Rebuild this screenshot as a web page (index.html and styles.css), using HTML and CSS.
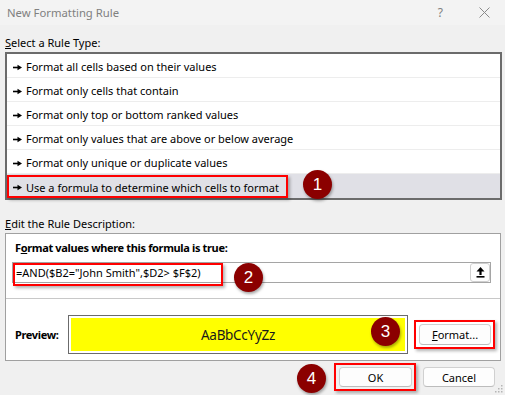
FILE: index.html
```html
<!DOCTYPE html>
<html lang="en">
<head>
  <meta charset="UTF-8"/>
  <title>New Formatting Rule</title>
  <link rel="stylesheet" href="styles.css">
</head>
<body>

  <svg width="0" height="0" class="defs">
    <symbol id="arrow" viewBox="0 0 9 7">
      <rect x="0" y="2.7" width="5" height="1.6" fill="#000"/>
      <polygon points="4.5,0.8 9,3.5 4.5,6.2" fill="#000"/>
    </symbol>
  </svg>

  <div class="dialog">
    <header class="titlebar">
      <span class="title">New Formatting Rule</span>
      <span class="help">?</span>
      <svg class="close" width="11" height="11" viewBox="0 0 11 11">
        <path d="M0.5 0.5 L10.5 10.5 M10.5 0.5 L0.5 10.5" stroke="#8a8a8a" stroke-width="1"/>
      </svg>
    </header>

    <div class="section-label"><u>S</u>elect a Rule Type:</div>
    <ul class="rule-list">
      <li><svg class="bullet"><use href="#arrow"/></svg>Format all cells based on their values</li>
      <li><svg class="bullet"><use href="#arrow"/></svg>Format only cells that contain</li>
      <li><svg class="bullet"><use href="#arrow"/></svg>Format only top or bottom ranked values</li>
      <li><svg class="bullet"><use href="#arrow"/></svg>Format only values that are above or below average</li>
      <li><svg class="bullet"><use href="#arrow"/></svg>Format only unique or duplicate values</li>
      <li class="selected">
        <svg class="bullet"><use href="#arrow"/></svg>Use a formula to determine which cells to format
        <span class="mark mark-rule"></span>
        <span class="badge badge-1">1</span>
      </li>
    </ul>

    <div class="section-label edit-label"><u>E</u>dit the Rule Description:</div>
    <div class="group">
      <div class="group-title">F<u>o</u>rmat values where this formula is true:</div>
      <div class="formula">
        <span class="formula-text">=AND($B2="John Smith",$D2&gt; $F$2)</span>
        <button class="pick-btn">
          <svg width="9" height="11" viewBox="0 0 9 11">
            <polygon points="4.5,0 0.5,4.5 8.5,4.5" fill="#000"/>
            <rect x="3.4" y="4" width="2.2" height="4" fill="#000"/>
            <rect x="0.5" y="9" width="8" height="1.6" fill="#000"/>
          </svg>
        </button>
        <span class="mark mark-formula"></span>
        <span class="badge badge-2">2</span>
      </div>

      <div class="rule-sep"></div>

      <div class="preview-row">
        <span class="preview-label">Preview:</span>
        <div class="preview">
          <div class="preview-fill">AaBbCcYyZz</div>
          <span class="badge badge-3">3</span>
        </div>
        <button class="btn format-btn boxed"><u>F</u>ormat...</button>
      </div>
    </div>

    <div class="actions">
      <button class="btn ok-btn boxed">OK<span class="badge badge-4">4</span></button>
      <button class="btn cancel-btn">Cancel</button>
    </div>

    <svg class="grip" width="8" height="8" viewBox="0 0 8 8">
      <rect x="6" y="0" width="1.5" height="1.5" fill="#b5b5b5"/>
      <rect x="3" y="3" width="1.5" height="1.5" fill="#b5b5b5"/>
      <rect x="6" y="3" width="1.5" height="1.5" fill="#b5b5b5"/>
      <rect x="0" y="6" width="1.5" height="1.5" fill="#b5b5b5"/>
      <rect x="3" y="6" width="1.5" height="1.5" fill="#b5b5b5"/>
      <rect x="6" y="6" width="1.5" height="1.5" fill="#b5b5b5"/>
    </svg>
  </div>

</body>
</html>
```

FILE: styles.css
```css
* {
  box-sizing: border-box;
}
body {
  margin: 0;
  background: #f0f0f0;
  font-family: 'Noto Sans', 'Liberation Sans', sans-serif;
  font-size: 11px;
  color: #000;
}

.defs {
  position: absolute;
}

.dialog {
  position: relative;
  width: 505px;
  height: 395px;
  overflow: hidden;
}

.titlebar {
  height: 25px;
  background: #f3f3f3;
  display: flex;
  align-items: center;
  padding: 0 15px 0 7px;
  color: #808080;
}
.title {
  flex: 1;
  font-size: 11.3px;
}
.help {
  font-size: 12px;
  margin-right: 36px;
}

.section-label {
  margin: 10px 5px 1px;
  line-height: 16px;
}
.edit-label {
  margin-top: 16px;
}

.rule-list {
  list-style: none;
  margin: 0 3px 0 5px;
  padding: 0;
  border: 2px solid #6b6b6b;
  background: #fff;
}
.rule-list li {
  position: relative;
  display: flex;
  align-items: center;
  height: 24px;
  padding: 5px 0 2px 6px;
  line-height: 16px;
  border-bottom: 1px solid #ededed;
  white-space: nowrap;
}
.rule-list li:last-child {
  border-bottom: none;
}
.rule-list li.selected {
  background: #e0e0e6;
}
.bullet {
  width: 9px;
  height: 7px;
  margin-right: 4px;
  flex: none;
}

/* red call-out boxes */
.mark {
  position: absolute;
  border: 2px solid #f00;
  box-shadow: 2px 2px 3px rgba(0, 0, 0, 0.3);
  pointer-events: none;
}
.mark-rule {
  left: 0;
  top: 1px;
  width: 281px;
  height: 23px;
}
.mark-formula {
  left: 0;
  top: 0;
  width: 210px;
  height: 23px;
}
.boxed {
  position: relative;
}
.boxed::after {
  content: "";
  position: absolute;
  left: -6px;
  right: -5px;
  top: -5px;
  bottom: -5px;
  border: 2px solid #f00;
  box-shadow: 2px 2px 3px rgba(0, 0, 0, 0.3);
}

.badge {
  position: absolute;
  width: 29px;
  height: 29px;
  border-radius: 50%;
  background: #8b0000;
  color: #fff;
  font-family: 'Liberation Sans', sans-serif;
  font-size: 17px;
  line-height: 29px;
  text-align: center;
  box-shadow: 1px 2px 3px rgba(0, 0, 0, 0.35);
  z-index: 2;
}
.badge-1 {
  left: 296px;
  top: -4px;
}
.badge-2 {
  left: 221px;
  top: 0;
}
.badge-3 {
  left: 302px;
  top: 1px;
}
.badge-4 {
  left: -43px;
  top: -4px;
}

.group {
  margin: 0 4px 0 5px;
  border: 1px solid #a0a0a0;
  background: #fff;
  padding: 6px 0 6px;
}
.group-title {
  font-weight: bold;
  padding-left: 9px;
  line-height: 16px;
  letter-spacing: -0.35px;
}

.formula {
  position: relative;
  display: flex;
  align-items: center;
  height: 21px;
  margin: 6px 9px 0 6px;
  border: 1px solid #a5a5a5;
}
.formula-text {
  flex: 1;
  padding-left: 3px;
  white-space: nowrap;
}
.pick-btn {
  width: 20px;
  height: 19px;
  padding: 0;
  display: flex;
  align-items: center;
  justify-content: center;
  background: #fdfdfd;
  border: 1px solid #cfcfcf;
  border-radius: 3px;
}

.rule-sep {
  border-top: 1px solid #c8c8c8;
  margin-top: 15px;
}

.preview-row {
  display: flex;
  align-items: center;
  margin-top: 16px;
  padding-left: 9px;
}
.preview-label {
  width: 53px;
  font-weight: bold;
  letter-spacing: -0.35px;
}
.preview {
  position: relative;
  width: 340px;
  height: 39px;
  padding: 2px;
  border: 1px solid #6b6b6b;
  background: #fff;
}
.preview-fill {
  height: 100%;
  display: flex;
  align-items: center;
  justify-content: center;
  background: #ffff00;
  font-size: 13.5px;
  letter-spacing: -0.3px;
  color: #1a1a1a;
}

.btn {
  height: 21px;
  padding: 0;
  font-family: inherit;
  font-size: 11px;
  color: #000;
  background: #fdfdfd;
  border: 1px solid #d0d0d0;
  border-bottom-color: #bcbcbc;
  border-radius: 4px;
}
.format-btn {
  width: 72px;
  margin-left: 11px;
}

.actions {
  display: flex;
  justify-content: flex-end;
  gap: 11px;
  padding: 6px 10px 0 0;
}
.ok-btn {
  width: 73px;
  height: 20px;
}
.cancel-btn {
  width: 72px;
  height: 20px;
}

.grip {
  position: absolute;
  right: 2px;
  bottom: 2px;
}
```
